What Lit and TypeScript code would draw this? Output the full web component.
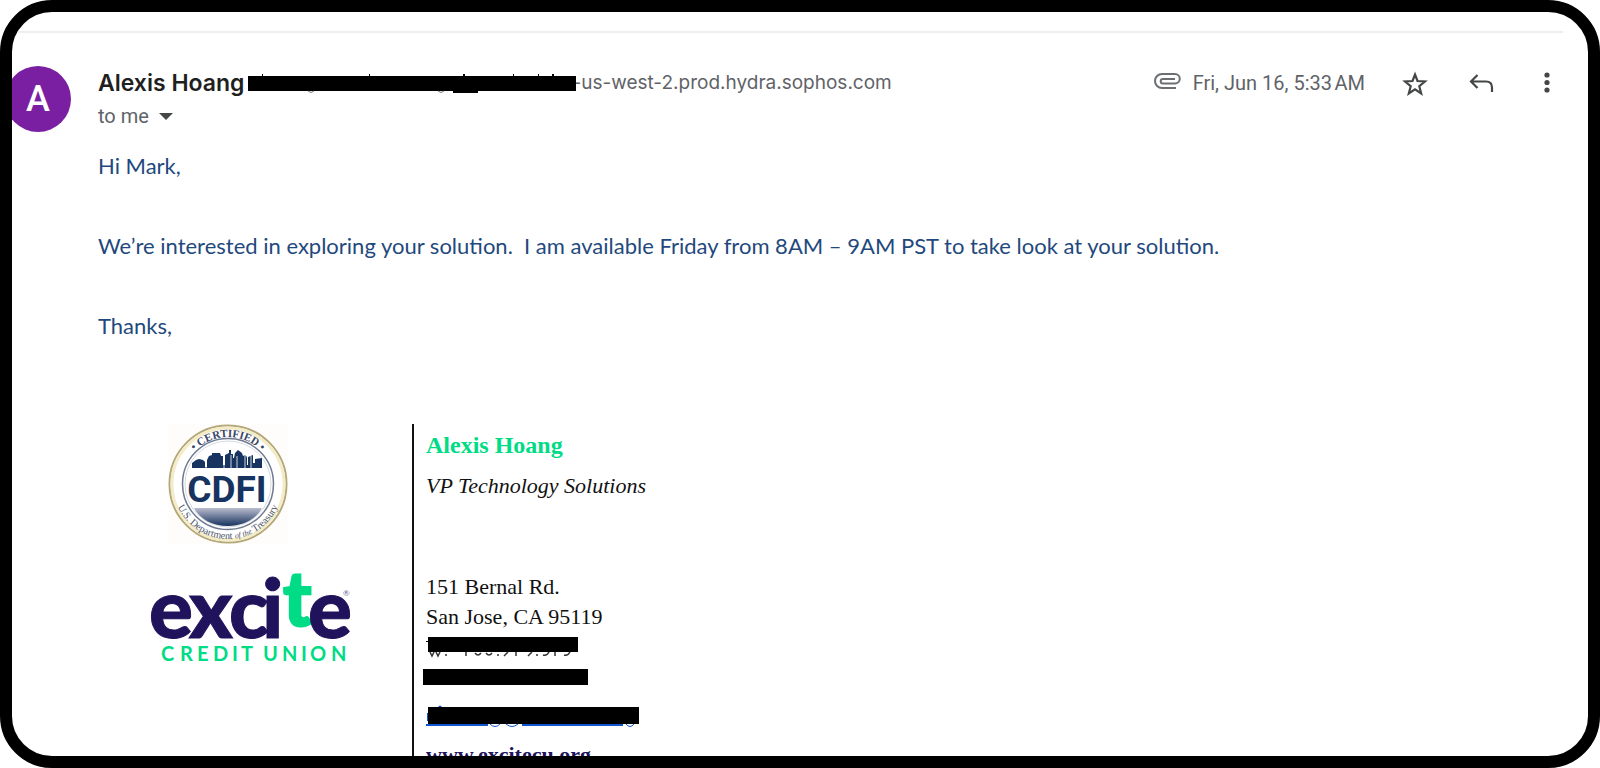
import { LitElement, html, css } from "lit";
import { customElement } from "lit/decorators.js";

@customElement("cdfi-seal")
class CdfiSeal extends LitElement {
  static styles = css`
    :host { display: block; }
    svg { display: block; width: 100%; height: auto; }
    .ring { font: 700 11px "Liberation Serif", serif; fill: #3a4565; }
    .dept { font: 400 10px "Liberation Serif", serif; fill: #4b5469; }
    .small { font-size: 8px; font-style: italic; }
    .cdfi { font: 700 37px "Roboto", sans-serif; fill: #17335f; }
  `;
  render() {
    return html`<svg viewBox="0 0 120 120" role="img" aria-label="Certified CDFI, U.S. Department of the Treasury">
      <defs>
        <linearGradient id="ground" x1="0" y1="0" x2="0" y2="1">
          <stop offset="0" stop-color="#b9bccd" />
          <stop offset="1" stop-color="#17335f" />
        </linearGradient>
        <path id="top-arc" d="M13 60a47 47 0 0 1 94 0" />
        <path id="bottom-arc" d="M5 60a55 55 0 0 0 110 0" />
      </defs>
      <rect width="120" height="120" fill="#fefdfb" />
      <circle cx="60" cy="60" r="58.5" fill="#fff" stroke="#b5a878" stroke-width="2" />
      <circle cx="60" cy="60" r="56" fill="none" stroke="#f4ecc8" stroke-width="3" />
      <circle cx="60" cy="60" r="45.5" fill="#fff" stroke="#6f7a90" stroke-width="1.5" />
      <circle cx="60" cy="60" r="43" fill="none" stroke="#c9ced9" stroke-width="0.8" />
      <text class="ring" text-anchor="middle"><textPath href="#top-arc" startOffset="50%">• CERTIFIED •</textPath></text>
      <text class="dept" text-anchor="middle"><textPath href="#bottom-arc" startOffset="50%">U.S. Department <tspan class="small">of the</tspan> Treasury</textPath></text>
      <path fill="#17335f" d="M24 44v-5l4-3 3-1 4 1 2 2v5h2v-7l2-4 3-1v-2h8l1 3h2v9h2V31l4-2v-3h2v4h2v4h1l1-5 3-3 4 3 1 3 2-1 2 2v8h1v-8l5-2v8h2v-4l7-1v10z" />
      <path stroke="#fff" stroke-width=".8" d="M38 34v10M56 32v12M63 31v13M69 32v12M77 31v13M83 32v12" />
      <text class="cdfi" x="59" y="78" text-anchor="middle">CDFI</text>
      <path fill="url(#ground)" d="M26 84h68c-6 11-18 18-34 18s-28-7-34-18z" />
    </svg>`;
  }
}

@customElement("excite-logo")
class ExciteLogo extends LitElement {
  static styles = css`
    :host { display: block; }
    svg { display: block; width: 100%; height: auto; overflow: visible; }
    .word { font: 900 82px "Lato", sans-serif; fill: #20135c; stroke: #20135c; stroke-width: 1px; }
    .tee { font-size: 76px; fill: #00dc86; stroke: #00dc86; stroke-width: 2px; }
    .union { font: 700 20px "Lato", sans-serif; fill: #00dc86; }
    .mark { font: 400 8px "Lato", sans-serif; fill: #6c6393; }
  `;
  render() {
    return html`<svg viewBox="0 0 200 90" role="img" aria-label="Excite Credit Union">
      <text class="word" y="65" x="-2 38 78 111">exci<tspan class="tee" x="132" y="53">t</tspan><tspan x="157" y="65">e</tspan></text>
      <text class="mark" x="192" y="23">®</text>
      <text class="union" y="88" x="10 29 46 62 81 90 112 131 150 159 180">CREDITUNION</text>
    </svg>`;
  }
}

@customElement("app-root")
class AppRoot extends LitElement {
  static styles = css`
    :host { display: block; background: #fff; }
    * { box-sizing: border-box; }
    .frame { height: 100vh; border: 12px solid #000; border-radius: 52px; overflow: hidden; background: #fff; }
    .rule { height: 2px; margin: 19px 25px 0 0; border: 0; background: #eceff1; }
    .message { display: grid; grid-template-columns: 58px 1fr; column-gap: 28px; padding: 33px 21px 0 0; }
    .avatar { width: 66px; height: 66px; margin-left: -7px; border-radius: 50%; background: #7b1fa2; color: #fff;
      text-align: center; font: 500 36px/66px "Roboto", sans-serif; }
    .head { display: flex; justify-content: space-between; align-items: center; height: 34px; font: 19px/34px "Inter", sans-serif; color: #5f6368; }
    .sender { display: flex; align-items: center; white-space: nowrap; }
    .name { margin: 0 4px 0 0; font: 600 23px/34px "Inter", sans-serif; color: #1f1f1f; }
    .bar-mail { position: relative; width: 328px; height: 20px; margin-right: -4px; }
    .meta { display: flex; align-items: center; white-space: nowrap; }
    .date { margin: 0 30px 0 12px; font: 20px/34px "Roboto", sans-serif; }
    .icons { display: flex; gap: 26px; }
    button { display: grid; place-items: center; padding: 0; border: 0; background: none; color: #444746; font: inherit; }
    .icon { width: 40px; height: 34px; }
    .to { height: 32px; gap: 10px; display: flex; align-items: center; font: 20px/32px "Roboto", sans-serif; color: #5f6368; }
    .body { margin-top: 14px; font: 22px/40px "Lato", sans-serif; color: #1f497d; white-space: pre-wrap; }
    .body p { margin: 0 0 40px; }
    .signature { display: grid; grid-template-columns: 316px 1fr; margin-top: 78px; min-height: 340px; }
    .logos { padding-left: 53px; border-right: 2px solid #111; }
    .seal { width: 120px; margin-left: 17px; }
    .excite { width: 200px; margin-top: 29px; }
    .card { padding: 6px 0 0 12px; font: 22px/30px "Liberation Serif", serif; color: #111; }
    .card p { margin: 0; }
    .card .who { font-weight: 700; font-size: 24px; color: #00dc86; }
    .card .role { margin: 11px 0 71px; font-style: italic; }
    .hidden-lines { display: block; width: 240px; height: 108px; overflow: visible; }
    a { font-weight: 700; color: #20135c; }
  `;
  render() {
    return html`<main class="frame">
      <hr class="rule" />
      <article class="message">
        <div class="avatar">A</div>
        <div>
          <header class="head">
            <div class="sender">
              <h1 class="name">Alexis Hoang</h1>
              <svg class="bar-mail" viewBox="0 0 328 20" role="img" aria-label="Redacted address">
                <path d="M0 3h328v15H230v2h-25v-2H0zM14 1h1v2h-1zM121 1h1v2h-1zM215 1h2v2h-2zM265 1h1v2h-1zM290 1h1v2h-1zM304 1h2v2h-2z" />
                <path d="M60 18q3 3 6 0M190 18q3 3 6 0" fill="none" stroke="#777" />
              </svg>
              <span>-us-west-2.prod.hydra.sophos.com</span>
            </div>
            <div class="meta">
              <svg width="28" height="22" viewBox="0 0 28 22" role="img" aria-label="Attachment" fill="none" stroke="#6b6f73" stroke-width="2">
                <path d="M23 16H9A7 7 0 0 1 9 2h13a4.500 4.500 0 0 1 0 9.500H10a2.300 2.300 0 0 1 0-4.600h12" />
              </svg>
              <time class="date">Fri, Jun 16, 5:33&#8239;AM</time>
              <div class="icons">
                <button class="icon" aria-label="Star"><svg width="26" height="28" viewBox="0 0 26 28" fill="none" stroke="currentColor" stroke-width="2.200"><path d="m13 5.500 2.500 6.500 7.500.5-5.700 4.700 1.900 7.300-6.200-4.100-6.200 4.100 1.900-7.300L3 12.500l7.500-.5z" /></svg></button>
                <button class="icon" aria-label="Reply"><svg width="26" height="26" viewBox="0 0 26 26" fill="none" stroke="currentColor" stroke-width="2.200"><path d="M9.500 5 3 11.500l6.500 6.500M3 11.500h15q6 0 6 6V22" /></svg></button>
                <button class="icon" aria-label="More"><svg width="26" height="26" viewBox="0 0 26 26" fill="currentColor"><circle cx="13" cy="5" r="2.600" /><circle cx="13" cy="12.500" r="2.600" /><circle cx="13" cy="20" r="2.600" /></svg></button>
              </div>
            </div>
          </header>
          <button class="to" aria-label="to me, show details"><span>to me</span><svg width="14" height="7" viewBox="0 0 14 7"><path fill="#444746" d="M0 0h14L7 7z" /></svg></button>
          <div class="body"><p>Hi Mark,</p><p>We’re interested in exploring your solution.  I am available Friday from 8AM – 9AM PST to take look at your solution.</p><p>Thanks,</p></div>
          <section class="signature">
            <div class="logos">
              <cdfi-seal class="seal"></cdfi-seal>
              <excite-logo class="excite"></excite-logo>
            </div>
            <div class="card">
              <p class="who">Alexis Hoang</p>
              <p class="role">VP Technology Solutions</p>
              <p>151 Bernal Rd.</p>
              <p>San Jose, CA 95119</p>
              <svg class="hidden-lines" viewBox="0 0 240 108" role="img" aria-label="Redacted contact details">
                <path d="M2 5h150v15H2zM-3 37h165v16H-3zM2 75h211v17H2zM0 9h2v1H0z" />
                <path d="M4 20l2 4 2-4M10 20l2 4 2-4M19 23h2M40 20v4M49 21q3 4 6 0M60 21q3 4 6 0M71 23h2M78 24l4-4M90 20v4M102 24l4-4M110 23h2M117 23q4 1 6-3M129 20v4M138 23q4 1 6-3" fill="none" stroke="#333" stroke-width="1.500" />
                <path d="M0 92h62v2H0zM96 92h101v2H96zM1 81h1v8H1zM12 75q2-3 4 0z" fill="#1155cc" />
                <path d="M64 92q5 5 10 0M80 92q6 5 12 0M200 92q4 5 8 0" fill="none" stroke="#1155cc" />
              </svg>
              <p><a href="#">www.excitecu.org</a></p>
            </div>
          </section>
        </div>
      </article>
    </main>`;
  }
}
